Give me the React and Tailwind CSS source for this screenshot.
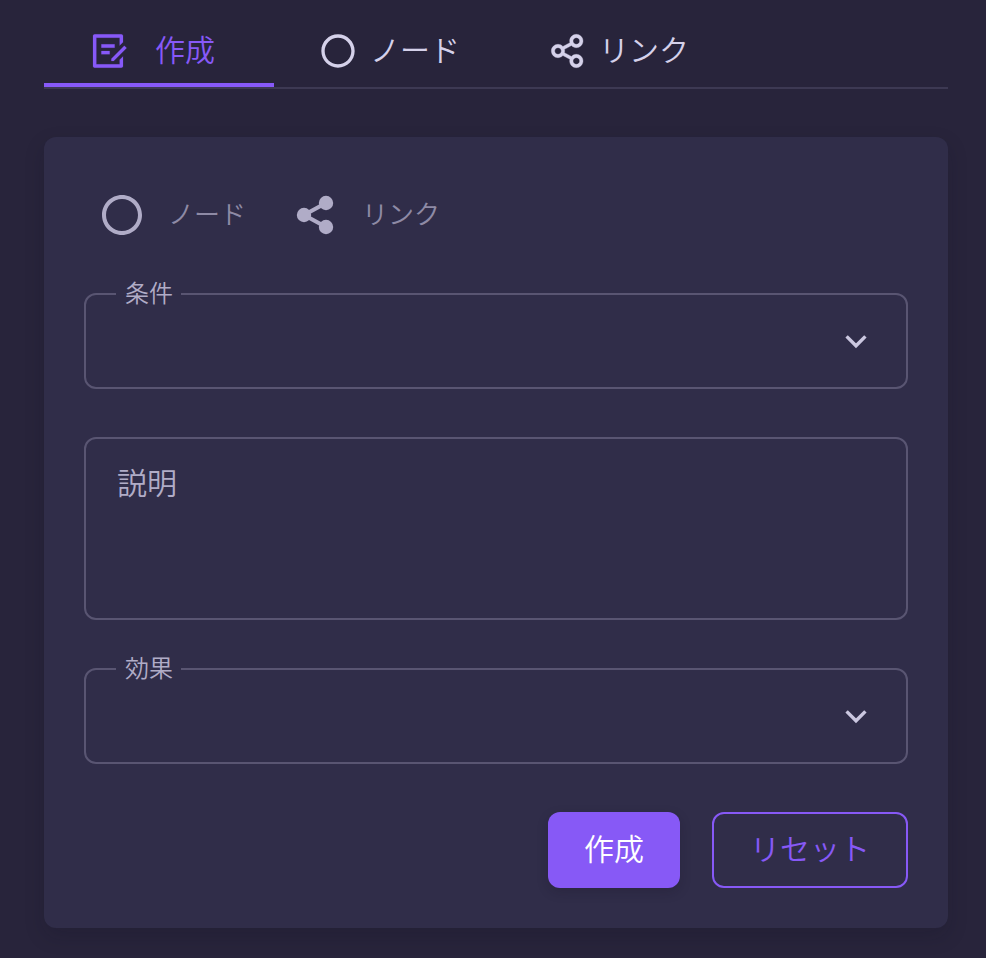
import { RiCircleLine, RiDraftLine, RiShareLine } from 'react-icons/ri';

function ShareNodes() {
  return (
    <svg className="size-12 shrink-0" viewBox="0 0 48 48" fill="currentColor">
      <path d="M13 24 35 12M13 24l22 12" stroke="currentColor" strokeWidth="4.2" />
      <circle cx="13" cy="24" r="7.2" />
      <circle cx="35" cy="12" r="7.2" />
      <circle cx="35" cy="36" r="7.2" />
    </svg>
  );
}

function SelectField({ label, className }) {
  return (
    <fieldset
      className={`h-[104px] rounded-xl border-2 border-[#595572] pr-[30px] pl-[30px] ${className}`}
    >
      <legend className="h-[18px] w-[65px] pl-[9px] text-left text-2xl leading-[14px] whitespace-nowrap text-[#b0acc7]">
        {label}
      </legend>
      <div className="flex h-[75px] items-center justify-end">
        <svg className="mr-2 size-6" viewBox="0 0 24 24" fill="none" stroke="#cbc7e0" strokeWidth="3.4">
          <path d="M2.6 7.4 12 16.8l9.4-9.4" />
        </svg>
      </div>
    </fieldset>
  );
}

export default function App() {
  return (
    <main className="h-[958px] w-[986px] overflow-hidden bg-[#28243b] pr-[38px] pl-11 font-['Noto_Sans_CJK_JP',sans-serif] font-[350]">
      <nav className="flex h-[89px] border-b-2 border-[#3d3953] text-[30px] leading-none text-[#d5d1ea]">
        <button className="-mb-0.5 flex h-[87px] w-[230px] items-center border-b-4 border-[#8759f8] pt-[19px] pb-0 pl-11 text-[#8759f8]">
          <RiDraftLine className="mb-[1px] size-10" strokeWidth="0.1" />
          <span className="ml-[27px] pb-[7px]">作成</span>
        </button>
        <button className="flex h-[87px] w-[230px] items-center pt-[15px] pl-11">
          <RiCircleLine className="size-10" />
          <span className="ml-3 pb-1.5">ノード</span>
        </button>
        <button className="flex h-[87px] items-center pt-[15px] pl-11">
          <RiShareLine className="size-10" strokeWidth="0.2" />
          <span className="ml-[11px] pb-1.5">リンク</span>
        </button>
      </nav>

      <section className="mt-12 h-[791px] rounded-xl bg-[#302d49] px-10 pt-[54px] shadow-[0_8px_20px_rgba(19,17,32,0.18)]">
        <div className="flex h-12 items-center pl-3.5 text-[26px] leading-none text-[#8e8aa5]">
          <RiCircleLine className="size-12 text-[#b0acc7]" />
          <span className="ml-[22px] pb-1">ノード</span>
          <span className="ml-[45px] flex text-[#b0acc7]">
            <ShareNodes />
          </span>
          <span className="ml-[23px] pb-1">リンク</span>
        </div>

        <SelectField label="条件" className="mt-[46px]" />

        <div className="mt-12 h-[183px] rounded-xl border-2 border-[#595572] px-[31px] pt-[27px] text-[30px] leading-none text-[#b0acc7]">
          説明
        </div>

        <SelectField label="効果" className="mt-10" />

        <div className="mt-12 flex justify-end gap-8 text-[30px] leading-none">
          <button className="h-[76px] w-[132px] rounded-xl bg-[#8759f6] pb-[7px] text-white shadow-[0_4px_12px_rgba(19,17,32,0.2)]">
            作成
          </button>
          <button className="h-[76px] w-[196px] rounded-xl border-2 border-[#8759f6] pb-[7px] text-[#8759f6]">
            リセット
          </button>
        </div>
      </section>
    </main>
  );
}
